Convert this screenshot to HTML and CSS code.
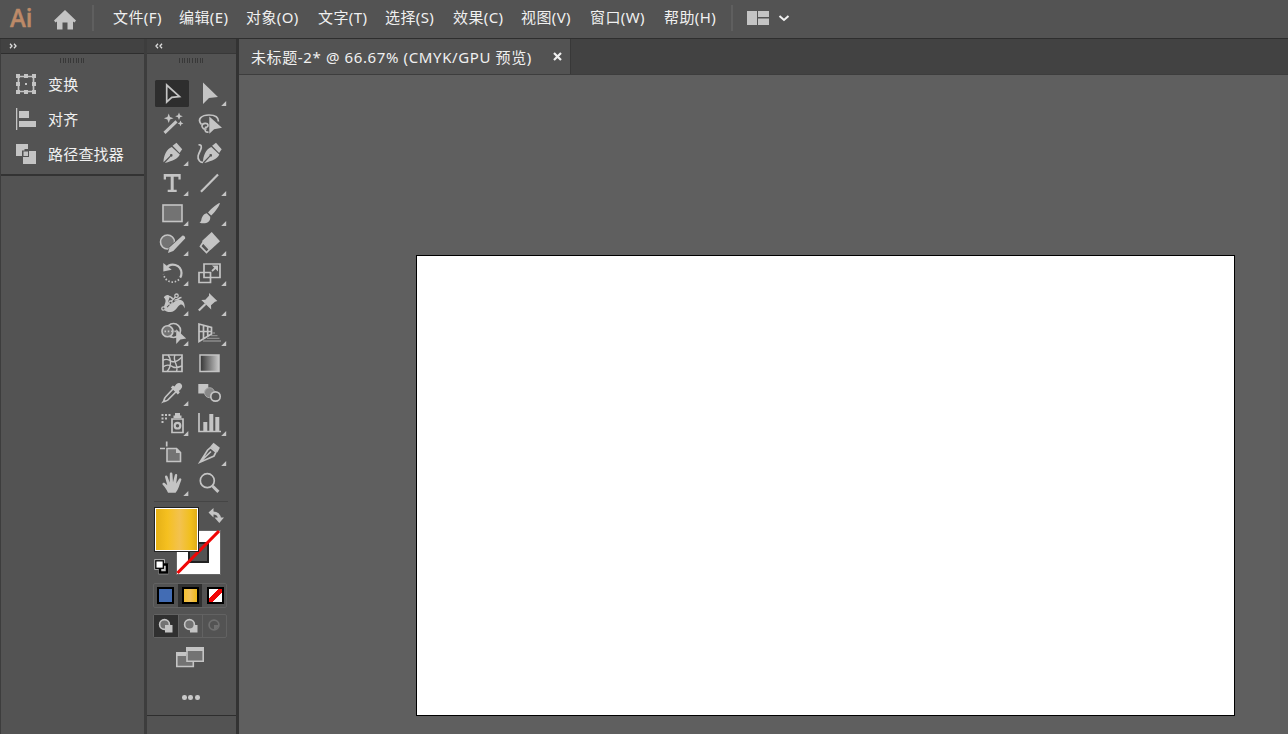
FILE: index.html
```html
<!DOCTYPE html>
<html lang="zh-CN">
<head>
<meta charset="utf-8">
<title>未标题-2</title>
<link rel="stylesheet" href="styles.css">
</head>
<body>
<div class="app">
  <header class="menubar">
    <span class="logo">Ai</span>
    <svg class="home" width="22" height="20" viewBox="0 0 22 20"><path d="M11 0 22 10.500 20.500 12.500 19 11.500V19.500H13.500V12.500h-5V19.500H3V11.500L1.500 12.500 0 10.500z"/></svg>
    <span class="rule"></span>
    <nav class="menus"><span>文件(F)</span><span>编辑(E)</span><span>对象(O)</span><span>文字(T)</span><span>选择(S)</span><span>效果(C)</span><span>视图(V)</span><span>窗口(W)</span><span>帮助(H)</span></nav>
    <span class="rule rule-end"></span>
    <svg class="layout" width="44" height="16" viewBox="0 0 44 16"><path class="f" d="M0 1h10v14H0zM11 1h11v6H11zM11 8.500h11V15H11z"/><path class="chev" d="m32.500 6 4.500 4L41.500 6"/></svg>
  </header>
  <div class="workspace">
    <aside class="dock">
      <div class="dock-head"><svg width="8" height="6" viewBox="0 0 8 6"><path class="s" d="m1 .8 2 2.200-2 2.200M5 .8l2 2.200-2 2.200"/></svg></div>
      <div class="panel-list">
        <div class="grip"></div>
        <div class="panel"><svg width="20" height="20" viewBox="0 0 20 20"><path class="s" d="M2.500 2.500h15v15h-15z"/><path class="f" d="M0 0h4v4H0zM8 0h4v4H8zM16 0h4v4h-4zM0 8h4v4H0zM16 8h4v4h-4zM0 16h4v4H0zM8 16h4v4H8zM16 16h4v4h-4zM9 9h2v2H9z"/></svg><span>变换</span></div>
        <div class="panel"><svg width="20" height="22" viewBox="0 0 20 22"><path class="f" d="M0 0h1.300v22H0zM3 3h10v7H3zM3 13h17v6H3z"/></svg><span>对齐</span></div>
        <div class="panel"><svg width="20" height="20" viewBox="0 0 20 20"><path class="f" fill-rule="evenodd" d="M0 0h12v5H8.500v1.500H6V12H0zM13 7h7v13H7v-7h6zM7.500 7.500H12V12H7.500z"/></svg><span>路径查找器</span></div>
      </div>
    </aside>
    <aside class="toolbox">
      <div class="tool-head"><svg width="8" height="6" viewBox="0 0 8 6"><path class="s" d="M3 .8 1 3l2 2.200M7 .8 5 3l2 2.200"/></svg></div>
      <div class="tool-body">
        <div class="grip"></div>
        <div class="tools">
          <svg viewBox="0 0 37 30"><rect class="active" x="1" y="2" width="34" height="27" rx="1.500"/><path class="s" d="M12.700 7v17l5.100-4.700 7.700-.8z"/></svg>
          <svg viewBox="0 0 37 30"><path class="f" d="M12 4.500v21.500l6-6 9-1z"/><path class="f" d="M35.200 23v5h-5z"/></svg>

          <svg viewBox="0 0 37 30"><path class="s w3" d="m10.500 24.800 12-11.500"/><path class="f" d="m14.700 5.500 1.300 3.500 3.500 1.300-3.500 1.300-1.300 3.500-1.300-3.500-3.500-1.300 3.500-1.300zM25 4.500l1.100 2.700 2.700 1-2.700 1-1.100 2.800-1.100-2.800-2.700-1 2.700-1zM26.500 12.500l.9 2 2 .9-2 .9-.9 2-.9-2-2-.9 2-.9z"/></svg>
          <svg viewBox="0 0 37 30"><path class="s" d="M10.500 16.500C5.500 11 11 7 18 7c6 0 9.500 2.500 9.500 6.500"/><path class="s" d="M15.500 20.500c-2 1.500-5-.5-4.500-3 .5-2.500 5.500-3 6-.5.300 2-2 3-3 1.800M14 21c0 2.500 1 3.500 3.500 3"/><path class="f" d="M18.300 8.500v17.300l4.800-4.600 7.900-1.400z"/></svg>

          <svg viewBox="0 0 37 30"><path class="f" d="m17.800 9 8 7.600c-1.800 4-6.800 6.400-15 8.400l6-6.400a1.300 1.300 0 1 0-.8-.8L9.500 24.300C9.500 18 12.500 11 17.800 9zM18.600 7.800 22.500 4.800l5.700 6.500-2.600 3.700z"/><path class="f" d="M34.300 23v5h-5z"/></svg>
          <svg viewBox="0 0 37 30"><path class="s" d="M7.500 7c3-1 3.500 2 2 5-2 4-4 8-1 11 1 1 2 1.500 3.500 1.200"/><path class="f" d="m20.300 9 8 7.600c-1.800 4-6.800 6.400-15 8.400l6-6.400a1.300 1.300 0 1 0-.8-.8L12 24.300C12 18 15 11 20.300 9zM21.100 7.800 25 4.800l5.700 6.500-2.600 3.700z"/></svg>

          <svg viewBox="0 0 37 30"><path class="f" d="M9.700 6h17v5.500h-2.300V8.700H19.700v13h3V24h-9v-2.300h3v-13h-4.700v2.800H9.700z"/><path class="f" d="M34.300 23v5h-5z"/></svg>
          <svg viewBox="0 0 37 30"><path class="s w2" d="M10 23.700 27 6.500"/><path class="f" d="M35.200 23v5h-5z"/></svg>

          <svg viewBox="0 0 37 30"><rect class="box" x="9" y="7" width="19" height="16.500"/><path class="f" d="M34.300 23v5h-5z"/></svg>
          <svg viewBox="0 0 37 30"><path class="f" d="M28.800 5c.8.800-4.400 9-8.600 12.600L17 14.400C20.500 10.300 28 4.200 28.800 5zM15.800 15.300l3.400 3.400c.8 6-6 7.900-10.700 5.700 2.300-.8 1.500-3.200 2.600-5.200 1-2.200 2.500-3.400 4.700-3.900z"/><path class="f" d="M35.200 23v5h-5z"/></svg>

          <svg viewBox="0 0 37 30"><circle class="box" cx="13.500" cy="14" r="7"/><path class="edge" d="m13 26.500 2-7.500L28.300 6.600l3.700 3.500L18.700 24z"/><path class="f" d="m14 25 1.600-5.700L28.300 7.700c1.300-.7 3.500 1.600 2.800 2.900L19.300 23z"/><path class="f" d="M34.300 23v5h-5z"/></svg>
          <svg viewBox="0 0 37 30"><path class="f" d="M20.700 4 29 13.200 19.500 22 11 13z"/><path class="s" d="m12 14.500 6.500 7-3 3-6-6.100z"/><path class="f" d="M35.200 23v5h-5z"/></svg>

          <svg viewBox="0 0 37 30"><path class="s w2" d="M11.500 10.500C17 3.500 27 6.500 27.500 15c0 2-.5 3.500-1.300 4.700"/><path class="s dots" d="M25 21.500c-5.500 5-14 2.500-15.500-5.500"/><path class="f" d="M9.300 5V13.500l8.400-1.800z"/><path class="f" d="M34.300 23v5h-5z"/></svg>
          <svg viewBox="0 0 37 30"><path class="s" d="M13 6h16v13.500H13zM8 14.500h11.500v10H8zM21 13l5-4.500"/><path class="f" d="M21 7.500H27V13.500z"/><path class="f" d="M35.200 23v5h-5z"/></svg>

          <svg viewBox="0 0 37 30"><path class="f" d="M9.800 9.500C11 6.500 15.500 6 15.500 9c0 1.800-1 3.300-1.600 5l2.600 1.500c1.500 1.500 3.300-2.500 7.500-3.500 5-1 7 3 6.800 8.500-1.500-3.500-3-4.500-4.600-3.700C23 18.500 22 23.700 16.500 24c-5 .3-8-2.500-6-7 1-2.500 2-5.500-.7-7.500z"/><path class="s" d="M15 8.500c3 0 3 3.500 6.500 3.500s3-2.500 6-2.500"/><path class="edge" d="m12 18.500 9-10 1.500 1-9 10z"/><path class="s thin" d="m10 20.500 13-13"/><circle class="node" cx="9.500" cy="20.500" r="1.700"/><circle class="node" cx="16.500" cy="14.700" r="1.700"/><circle class="node" cx="22.500" cy="7.700" r="1.700"/><path class="f" d="M34.300 23v5h-5z"/></svg>
          <svg viewBox="0 0 37 30"><path class="f" d="M18 5 26.300 13l-2.300.8-4 3.400.2 4.300-9.900-9.500 4-.2 3.700-4.100z"/><path class="s w2" d="m14.500 16-6.700 6.500"/><path class="f" d="M35.200 23v5h-5z"/></svg>

          <svg viewBox="0 0 37 30"><circle class="s" cx="19.500" cy="12.500" r="7"/><circle class="box" cx="13.500" cy="13.300" r="5.500"/><path class="s dots" d="M10.500 13.300h12"/><path class="f" d="M22.200 11.200V26l4.200-4.500 5.800-1z"/><path class="f" d="M34.300 23v5h-5z"/></svg>
          <svg viewBox="0 0 37 30"><path class="s" d="M8 6v17.500l12.500-7.500V9.500zM12.500 7v13.500M16.700 8.500v9.500M8 13.500h12.500"/><path class="faint" d="M21 15h3M20 17.700h6.500M16 20.400h12.500M12 23h18"/><path class="f" d="M35.200 23v5h-5z"/></svg>

          <svg viewBox="0 0 37 30"><path class="s" d="M9 7h19v16.500H9z"/><path class="s thin" d="M14 7c3.500 4 3.500 12-1 16.500M21 7c-3 6 4 10 1.500 16.500M9 12.500c4-3 6 0 9 1s6-.5 10-4.500M9 19c5-4 8-1 10 0s5 .500 9-1"/></svg>
          <svg viewBox="0 0 37 30"><defs><linearGradient id="gray"><stop stop-color="#333"/><stop offset="1" stop-color="#c8c8c8"/></linearGradient></defs><rect fill="url(#gray)" stroke="#c4c4c4" stroke-width="1.500" x="9" y="7" width="19" height="16.500"/></svg>

          <svg viewBox="0 0 37 30"><path class="s" d="m19 11-7.500 8c-1.500 1.500-1 3-2 4.500 1.500-.7 3-.2 4.300-1.500l8-8"/><path class="f" d="m16.800 9.500 2-2 1.700 1c1.500-2.500 4.200-4.700 6.700-2.600 2.200 2.300.3 5.200-2.400 6.900l1 1.700-2 2z"/><path class="f" d="M34.300 23v5h-5z"/></svg>
          <svg viewBox="0 0 37 30"><path class="f" d="M7.300 6h10v9.500h-10z"/><circle class="mid" cx="18.500" cy="14.700" r="5"/><circle class="ring" cx="24.500" cy="18.500" r="4.700"/></svg>

          <svg viewBox="0 0 37 30"><path class="s" d="M18 11h11v13.500H18z"/><circle class="s w2" cx="23.500" cy="17.700" r="2.800"/><path class="f" d="M19.500 7.500h1.500V5h5v2.500h1.500V10h-8zM7.500 6h2v2h-2zM11 6h2v2h-2zM14.500 6h2v2h-2zM7.500 9.500h2v2h-2zM11 9.500h2v2h-2zM7.500 13h2v2h-2z"/><path class="f" d="M34.300 23v5h-5z"/></svg>
          <svg viewBox="0 0 37 30"><path class="s" d="M8 5v18.500h22"/><path class="f" d="M12.300 14h4v9h-4zM18.300 6h4v17h-4zM24.300 9h4v14h-4z"/><path class="f" d="M35.200 23v5h-5z"/></svg>

          <svg viewBox="0 0 37 30"><path class="box" d="M13 10.500h9.500l4 4v9H13z"/><path class="s" d="M12.700 3.500V8.500M6 10.500h5"/><path class="f" d="M22 10v5h5z"/></svg>
          <svg viewBox="0 0 37 30"><path class="s" d="m19.500 9.500 5.500 4.500-2 4L9 24.200l7.500-12zM9 24l11-10.500"/><path class="f" d="M22.500 4.800 28.900 9.700 26.300 14.600l-7-6z"/><path class="f" d="M35.200 23v5h-5z"/></svg>

          <svg viewBox="0 0 37 30"><path class="f" d="M14 24.800c-1.500-3.500-3.300-6-5.500-8.300-.5-1.400 1.200-2.100 2.200-1.400l2.600 2.100L11 9c-.2-1.600 2-2.100 2.500-.5l2.200 6 .1-8.700c.1-1.600 2.500-1.600 2.600 0l.6 8.400 1.800-7.200c.5-1.500 2.600-1.100 2.400.5l-1 8 2.800-4.600c.8-1.400 2.800-.5 2.300 1-2 4.700-2.700 9.400-5.700 12.900z"/><path class="f" d="M34.300 23v5h-5z"/></svg>
          <svg viewBox="0 0 37 30"><circle class="s" cx="16.300" cy="12.700" r="7"/><path class="s w3" d="m21.500 18 5.900 5.900"/></svg>
        </div>
        <svg class="colors" width="74" height="80" viewBox="0 0 74 80">
          <defs><linearGradient id="gold"><stop stop-color="#e5b016"/><stop offset=".28" stop-color="#f5c020"/><stop offset=".58" stop-color="#f3c24f"/><stop offset=".85" stop-color="#f1bf1b"/><stop offset="1" stop-color="#e0ad18"/></linearGradient></defs>
          <path fill="#fff" stroke="#666" d="M22.500 28.500h44v44h-44z"/>
          <rect x="35" y="41" width="19" height="19" fill="#535353" stroke="#222" stroke-width="2"/>
          <path d="m23.500 71 41.500-42" stroke="#f00606" stroke-width="3.200"/>
          <rect x=".5" y="5.500" width="44" height="44" fill="#fff" stroke="#222"/>
          <rect x="2" y="7" width="41" height="41" fill="url(#gold)"/>
          <path class="s w3" d="M58 11c5-.5 7.500 2 7.500 6"/><path class="f" d="M54.500 10.500 59.500 6v9.500zM60.500 15.500h9.500L65.300 21z"/>
          <path fill="#c4c4c4" d="M.3 57.300h10.500v4.500h3.500v10.500H4.500v-4.500H.3z"/><rect x="6" y="62.500" width="7" height="8" fill="#c4c4c4" stroke="#000" stroke-width="2.500"/><rect x="1.800" y="58.800" width="7.500" height="7.500" fill="#fff" stroke="#000" stroke-width="1.300"/>
        </svg>
        <div class="segments fill-modes"><span><i class="chip blue"></i></span><span class="on"><i class="chip gold"></i></span><span><i class="chip none"></i></span></div>
        <div class="segments draw-modes">
          <span class="on"><svg width="16" height="16" viewBox="0 0 16 16"><circle class="box" cx="6.500" cy="6.500" r="4.900"/><path class="f" d="M7 7h7.500v7.500H7z"/></svg></span>
          <span><svg width="16" height="16" viewBox="0 0 16 16"><path class="f" d="M7 7h7.500v7.500H7z"/><circle class="box" cx="6.500" cy="6.500" r="4.900"/></svg></span>
          <span class="off"><svg width="16" height="16" viewBox="0 0 16 16"><circle class="s" cx="7" cy="7" r="4.900"/><path class="f" d="M7 7h4v2l-2 2H7z"/></svg></span>
        </div>
        <svg class="screen" width="28" height="21" viewBox="0 0 28 21"><path class="box" d="M.8 6h16.500v13.500H.8z"/><path class="f" d="M0 5h10v4H0z"/><path class="box" d="M11 1.500h16.200v12.700H11z"/><path class="f" d="M10 0h18v4H10z"/></svg>
        <div class="ellipsis"><i></i><i></i><i></i></div>
      </div>
    </aside>
    <main class="document">
      <div class="tabs"><div class="tab"><span class="title">未标题-2* @ 66.67% (CMYK/GPU 预览)</span><svg width="9" height="9" viewBox="0 0 9 9"><path d="m1 1 7 7M8 1 1 8"/></svg></div></div>
      <div class="canvas"><div class="artboard"></div></div>
    </main>
  </div>
</div>
</body>
</html>
```
FILE: styles.css
```css
* { box-sizing: border-box; }
body { margin: 0; overflow: hidden; background: #535353; color: #f0f0f0; font: 15px/20px "Noto Sans", "Noto Sans CJK SC", sans-serif; }
.app { width: 1288px; height: 734px; display: flex; flex-direction: column; }
svg { display: block; flex: none; }

.f { fill: #c4c4c4; }
.s { fill: none; stroke: #c4c4c4; stroke-width: 1.7; }
.w2 { stroke-width: 2.2; }
.w3 { stroke-width: 3; }
.thin { stroke-width: 1.4; }
.dots { stroke-dasharray: 1.5 1.8; }
.box { fill: #737373; stroke: #c4c4c4; stroke-width: 1.6; }
.mid { fill: #888; stroke: #aaa; }
.ring { fill: #535353; stroke: #c4c4c4; stroke-width: 1.7; }
.node { fill: #535353; stroke: #c4c4c4; stroke-width: 1.3; }
.edge { fill: #535353; }
.faint { fill: none; stroke: #8c8c8c; stroke-width: 1.3; }
.active { fill: #2e2e2e; }

.menubar { height: 39px; flex: none; display: flex; align-items: center; padding-left: 10px; border-bottom: 1px solid #2e2e2e; }
.logo { width: 44px; color: #bd8a68; font: 600 26px/36px "Open Sans", sans-serif; -webkit-text-stroke: .5px #bd8a68; transform: scaleX(.92); transform-origin: 0 50%; margin-top: -4px; }
.home { fill: #c4c4c4; margin-top: 1px; }
.rule { width: 2px; height: 26px; margin: -2px 19px 0 16px; background: #5f5f5f; }
.menus { display: grid; grid-template-columns: 66px 67px 72px 67px 68px 68px 69px 74px 67px; white-space: nowrap; margin-top: -5px; letter-spacing: .4px; }
.rule-end { margin: -2px 14px 0 0; }
.layout { margin-top: -3px; }
.chev { fill: none; stroke: #f0f0f0; stroke-width: 2; }

.workspace { flex: 1; min-height: 0; display: flex; }
.dock { width: 147px; border-left: 1px solid #3d3d3d; border-right: 3px solid #3d3d3d; }
.dock-head, .tool-head { height: 15px; padding: 4px 0 0 8px; background: #424242; border-bottom: 1px solid #2e2e2e; }
.dock-head .s, .tool-head .s { stroke: #ddd; stroke-width: 1.3; }
.panel-list { height: 122px; padding-top: 1px; border-bottom: 2px solid #333; }
.grip { width: 24px; height: 5px; background: repeating-linear-gradient(90deg, #383838 0 1px, transparent 1px 2.6px); }
.panel-list .grip { margin: 3px 0 0 59px; }
.panel { height: 35px; display: flex; align-items: center; gap: 12px; padding-left: 15px; }
.panel-list .grip + .panel { margin-top: 3px; }
.panel span { margin-top: 1px; letter-spacing: .2px; }

.toolbox { width: 89px; }
.tool-head { border-bottom: 1px solid #383838; }
.tool-body { height: 662px; display: flex; flex-direction: column; padding-left: 7px; border-bottom: 1px solid #2e2e2e; }
.tool-body .grip { margin: 4px 0 0 25px; flex: none; }
.tools { display: grid; grid-template-columns: 37px 37px; grid-auto-rows: 30px; margin-top: 15px; padding-bottom: 3px; border-bottom: 1px solid #454545; width: 74px; }
.tools svg { width: 37px; height: 30px; }
.segments { width: 74px; height: 25px; flex: none; display: grid; grid-template-columns: 24px 24px 24px; border: 1px solid #626262; border-radius: 2px; }
.segments { margin-left: -1px; }
.segments span { display: flex; align-items: center; justify-content: center; }
.segments .on { background: #303030; }
.chip { width: 17px; height: 17px; border: 2px solid #000; }
.blue { background: #426cb4; margin-right: 1px; }
.gold { background: linear-gradient(90deg, #f4c032, #f2c25a 50%, #edb819); }
.none { background: linear-gradient(135deg, #fff 0 36%, #f00606 36% 64%, #fff 64%); margin-left: 2px; }
.fill-modes { margin-top: 1px; }
.draw-modes { height: 24px; margin-top: 6px; }
.draw-modes span + span { border-left: 1px solid #626262; }
.off svg { opacity: .25; }
.screen { margin: 9px 0 0 22px; }
.ellipsis { display: flex; gap: 1.8px; margin: 27px 0 0 28px; }
.ellipsis i { width: 4.700px; height: 4.700px; border-radius: 50%; background: #c9c9c9; }

.document { flex: 1; min-width: 0; display: flex; flex-direction: column; border-left: 3px solid #333; }
.tabs { height: 36px; background: #424242; border-bottom: 1px solid #3d3d3d; display: flex; }
.tab { width: 332px; display: flex; align-items: center; background: #535353; border-right: 1px solid #383838; padding-left: 12px; }
.title { width: 302px; white-space: nowrap; letter-spacing: .62px; }
.tab svg { fill: none; stroke: #f0f0f0; stroke-width: 2.2; margin-top: -1px; }
.canvas { flex: 1; background: #5f5f5f; padding: 180px 0 0 177px; }
.artboard { width: 819px; height: 461px; border: 1px solid #000; background: #fff; }
```
